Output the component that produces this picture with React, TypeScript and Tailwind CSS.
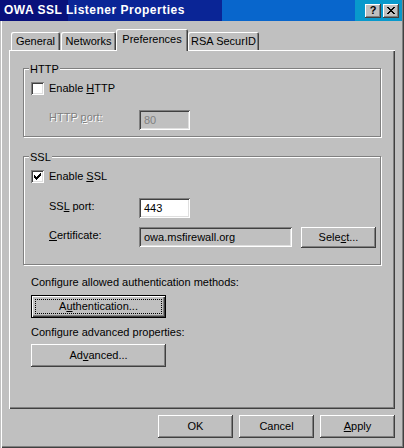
import React from "react";

const raised = "shadow-[inset_-1px_-1px_#404040,inset_1px_1px_#fff,inset_-2px_-2px_#808080]";
const sunken = "shadow-[inset_1px_1px_#808080,inset_-1px_-1px_#fff,inset_2px_2px_#404040,inset_-2px_-2px_#dfdfdf]";
const etched = "border border-[#808080] shadow-[inset_1px_1px_#fff,1px_1px_#fff]";

// classic 7x7 check mark, pixel coords inside the 13x13 box
const CHECK: [number, number][] = [
  [9, 3], [8, 4], [9, 4], [3, 5], [7, 5], [8, 5], [9, 5],
  [3, 6], [4, 6], [6, 6], [7, 6], [8, 6], [3, 7], [4, 7], [5, 7], [6, 7], [7, 7],
  [4, 8], [5, 8], [6, 8], [5, 9],
];

const CLOSE: [number, number][] = [
  [0, 0], [1, 0], [6, 0], [7, 0], [1, 1], [2, 1], [5, 1], [6, 1],
  [2, 2], [3, 2], [4, 2], [5, 2], [3, 3], [4, 3], [2, 4], [3, 4], [4, 4], [5, 4],
  [1, 5], [2, 5], [5, 5], [6, 5], [0, 6], [1, 6], [6, 6], [7, 6],
];

function CheckBox({ checked }: { checked?: boolean }) {
  return (
    <span className={`relative w-[13px] h-[13px] bg-white shrink-0 ${sunken}`}>
      {checked && (
        <svg className="absolute left-0 top-0" width="13" height="13" shapeRendering="crispEdges">
          {CHECK.map(([x, y]) => (
            <rect key={`${x}-${y}`} x={x} y={y} width="1" height="1" fill="#000" />
          ))}
        </svg>
      )}
    </span>
  );
}

function Button({ children, className = "" }: { children: React.ReactNode; className?: string }) {
  return (
    <div className={`flex items-center justify-center bg-[#c0c0c0] ${raised} ${className}`}>
      {children}
    </div>
  );
}

function Tab({ label, active, className = "" }: { label: string; active?: boolean; className?: string }) {
  return (
    <div
      className={`flex items-center justify-center bg-[#c0c0c0] rounded-t-[2px] shadow-[inset_1px_1px_#fff,inset_-1px_0_#404040,inset_-2px_0_#808080] ${
        active ? "relative z-10 -mb-px h-[22px] pb-[2px]" : "h-[18px]"
      } ${className}`}
    >
      {label}
    </div>
  );
}

export default function App() {
  return (
    <div className="w-[404px] h-[448px] bg-[#c0c0c0] flex flex-col text-[11px] leading-[13px] text-black font-['Liberation_Sans',Arial,sans-serif] shadow-[inset_1px_0_#c0c0c0,inset_2px_0_#fff,inset_-1px_-1px_#404040,inset_-2px_-2px_#808080]">
      {/* Title bar */}
      <div className="h-[21px] w-[402px] shrink-0 flex items-center pl-[4px] pr-[3px] bg-[linear-gradient(to_right,#08107b_0px,#08107b_68px,#0a2596_68px,#0a2596_222px,#0866cc_222px,#0866cc_355px,#0899cc_355px)]">
        <span className="text-white font-bold text-[12px] tracking-[0.5px]">OWA SSL Listener Properties</span>
        <div className="ml-auto flex gap-[2px]">
          <Button className="w-[16px] h-[14px] font-bold text-[11px] leading-[11px]">?</Button>
          <Button className="w-[16px] h-[14px]">
            <svg width="8" height="7" shapeRendering="crispEdges">
              {CLOSE.map(([x, y]) => (
                <rect key={`${x}-${y}`} x={x} y={y} width="1" height="1" fill="#000" />
              ))}
            </svg>
          </Button>
        </div>
      </div>

      {/* Tabs */}
      <div className="mt-[8px] ml-[11px] h-[21px] flex items-end">
        <Tab label="General" className="w-[49px] mr-[1px]" />
        <Tab label="Networks" className="w-[55px]" />
        <Tab label="Preferences" active className="w-[72px]" />
        <Tab label="RSA SecurID" className="w-[71px]" />
      </div>

      {/* Tab panel */}
      <div className="ml-[9px] w-[386px] h-[359px] shrink-0 flex flex-col pt-[18px] px-[14px] shadow-[inset_1px_1px_#fff,inset_-1px_-1px_#404040,inset_-2px_-2px_#808080]">
        {/* HTTP */}
        <div className={`relative h-[69px] shrink-0 ${etched}`}>
          <span className="absolute -top-[6px] left-[5px] px-[1px] bg-[#c0c0c0]">HTTP</span>
          <div className="mt-[13px] ml-[7px] h-[13px] flex items-center gap-[5px]">
            <CheckBox />
            <span>
              Enable <span className="underline">H</span>TTP
            </span>
          </div>
          <div className="mt-[15px] ml-[25px] flex items-start">
            <span className="w-[90px] mt-[1px] text-[#808080] [text-shadow:1px_1px_0_#fff]">
              HTTP <span className="underline">p</span>ort:
            </span>
            <div className={`w-[51px] h-[20px] flex items-center pl-[5px] text-[#808080] ${sunken}`}>80</div>
          </div>
        </div>

        {/* SSL */}
        <div className={`relative mt-[19px] h-[109px] shrink-0 ${etched}`}>
          <span className="absolute -top-[6px] left-[5px] px-[1px] bg-[#c0c0c0]">SSL</span>
          <div className="mt-[13px] ml-[7px] h-[13px] flex items-center gap-[5px]">
            <CheckBox checked />
            <span>
              Enable <span className="underline">S</span>SL
            </span>
          </div>
          <div className="mt-[15px] ml-[25px] flex items-start">
            <span className="w-[90px] mt-[2px]">
              SS<span className="underline">L</span> port:
            </span>
            <div className={`w-[51px] h-[20px] flex items-center pl-[5px] bg-white ${sunken}`}>443</div>
          </div>
          <div className="mt-[9px] ml-[25px] flex items-start">
            <span className="w-[90px] mt-[2px]">
              <span className="underline">C</span>ertificate:
            </span>
            <div className={`w-[153px] h-[20px] flex items-center pl-[5px] ${sunken}`}>owa.msfirewall.org</div>
            <Button className="ml-[9px] w-[75px] h-[21px]">
              <span>
                Sele<span className="underline">c</span>t...
              </span>
            </Button>
          </div>
        </div>

        <p className="mt-[11px] ml-[8px]">Configure allowed authentication methods:</p>
        <div className="relative mt-[6px] ml-[8px] w-[135px] h-[23px] flex items-center justify-center bg-[#c0c0c0] shadow-[inset_0_0_0_1px_#000,inset_2px_2px_#fff,inset_-2px_-2px_#404040,inset_-3px_-3px_#808080]">
          <span>
            A<span className="underline">u</span>thentication...
          </span>
          <span className="absolute inset-[4px] border border-dotted border-black" />
        </div>

        <p className="mt-[8px] ml-[8px]">Configure advanced properties:</p>
        <Button className="mt-[5px] ml-[8px] w-[135px] h-[23px]">
          <span>
            Ad<span className="underline">v</span>anced...
          </span>
        </Button>
      </div>

      {/* Dialog buttons */}
      <div className="mt-[6px] ml-[9px] w-[386px] flex justify-end gap-[6px]">
        <Button className="w-[75px] h-[23px]">OK</Button>
        <Button className="w-[75px] h-[23px]">Cancel</Button>
        <Button className="w-[75px] h-[23px]">
          <span>
            <span className="underline">A</span>pply
          </span>
        </Button>
      </div>
    </div>
  );
}
